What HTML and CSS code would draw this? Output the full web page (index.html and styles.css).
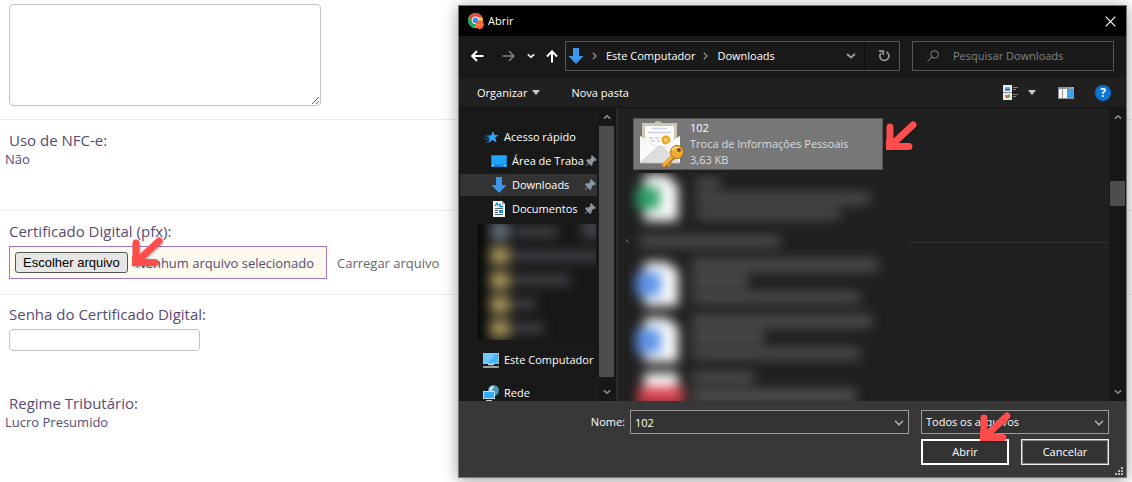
FILE: index.html
```html
<!DOCTYPE html>
<html lang="pt-BR">
<head>
<meta charset="utf-8">
<meta name="viewport" content="width=device-width, initial-scale=1">
<title>Certificado Digital</title>
<link rel="stylesheet" href="styles.css">
</head>
<body>
<svg class="defs" aria-hidden="true">
  <defs>
    <symbol id="arrow" viewBox="0 0 33 33">
      <path d="M6 7V25.500M25 26.500H6M6.500 26L29 5" fill="none" stroke="#ff4d4d" stroke-width="7" stroke-linecap="round" stroke-linejoin="round"/>
      <path d="M2 30V20H10V30Z" fill="#ff4d4d"/>
    </symbol>
    <symbol id="pin" viewBox="0 0 11 12">
      <path d="M6 0L11 5L9.500 6L8.500 5.800L6.500 8L6.500 10L5 11L2.800 8.400L.5 11L0 10.500L2.200 8L0 5.500L1.200 4.200L3.500 4.500L5.500 2.500L5 1Z" fill="#8a979f"/>
    </symbol>
    <symbol id="down" viewBox="0 0 16 16">
      <path d="M5 0H11V8H15.500L8 16L.5 8H5Z" fill="#3c97e8"/>
    </symbol>
    <symbol id="chev" viewBox="0 0 10 6">
      <path d="M1 .8L5 4.800L9 .8" fill="none" stroke="currentColor" stroke-width="1.300"/>
    </symbol>
    <symbol id="chev-bold" viewBox="0 0 10 6">
      <path d="M1 1L5 4.500L9 1" fill="none" stroke="currentColor" stroke-width="2"/>
    </symbol>
  </defs>
</svg>

<form class="form">
  <div class="row row-notes">
    <textarea class="notes" aria-label="Observações"></textarea>
  </div>
  <div class="row row-nfce">
    <div class="label">Uso de NFC-e:</div>
    <div class="value">Não</div>
  </div>
  <div class="row row-cert">
    <label class="label" for="choose">Certificado Digital (pfx):</label>
    <div class="upload">
      <div class="file">
        <button class="choose" id="choose" type="button">Escolher arquivo</button>
        <span>Nenhum arquivo selecionado</span>
        <svg class="arrow arrow-file" aria-hidden="true"><use href="#arrow"/></svg>
      </div>
      <a class="send" href="#">Carregar arquivo</a>
    </div>
  </div>
  <div class="row row-pass">
    <label class="label" for="pass">Senha do Certificado Digital:</label>
    <input class="pass" id="pass" type="password">
  </div>
  <div class="row row-tax">
    <div class="label">Regime Tributário:</div>
    <div class="value">Lucro Presumido</div>
  </div>
</form>

<section class="dialog" role="dialog" aria-label="Abrir">
  <header class="titlebar">
    <svg width="16" height="16" viewBox="0 0 16 16" aria-hidden="true">
      <circle cx="7.500" cy="7.500" r="7.500" fill="#fbc02d"/>
      <path d="M1 3.800A7.500 7.500 0 0 1 14.200 4.200H7.500L4.500 9Z" fill="#de4b3f"/>
      <path d="M1 3.800L5 10.500L8 11L6.500 15A7.500 7.500 0 0 1 1 3.800Z" fill="#1da462"/>
      <circle cx="7.500" cy="7.300" r="3.700" fill="#fff"/><circle cx="7.500" cy="7.300" r="2.900" fill="#4385f5"/>
      <circle cx="11.700" cy="11.700" r="4.200" fill="#ff6235"/>
      <path d="M9 12H14.500" stroke="#ffc2a8" stroke-width="1.200" stroke-dasharray="1.200 .6"/>
    </svg>
    <h1>Abrir</h1>
    <button class="plain close" type="button" aria-label="Fechar">
      <svg width="11" height="11" viewBox="0 0 11 11"><path d="M.7 .7L10.300 10.300M10.300 .7L.7 10.300" stroke="#fff" stroke-width="1.200"/></svg>
    </button>
  </header>

  <nav class="nav">
    <button class="plain" type="button" aria-label="Voltar"><svg width="13" height="12" viewBox="0 0 13 12"><path d="M12.500 6H1.500M6 1L1.200 6L6 11" fill="none" stroke="#fff" stroke-width="2"/></svg></button>
    <button class="plain fwd" type="button" aria-label="Avançar"><svg width="13" height="12" viewBox="0 0 13 12"><path d="M.5 6H11.500M7 1L11.800 6L7 11" fill="none" stroke="#838383" stroke-width="1.600"/></svg></button>
    <button class="plain recent" type="button" aria-label="Locais recentes"><svg width="8" height="6"><use href="#chev-bold"/></svg></button>
    <button class="plain up" type="button" aria-label="Acima"><svg width="12" height="13" viewBox="0 0 12 13"><path d="M6 12.500V1.500M1 6.500L6 1.300L11 6.500" fill="none" stroke="#fff" stroke-width="2"/></svg></button>
    <div class="address">
      <svg width="16" height="16"><use href="#down"/></svg>
      <svg class="sep" width="5" height="8" viewBox="0 0 5 8"><path d="M.8 .8L4 4L.8 7.200" fill="none" stroke="#888" stroke-width="1.500"/></svg>
      <span>Este Computador</span>
      <svg class="sep" width="5" height="8" viewBox="0 0 5 8"><path d="M.8 .8L4 4L.8 7.200" fill="none" stroke="#888" stroke-width="1.500"/></svg>
      <span>Downloads</span>
      <button class="plain drop" type="button" aria-label="Histórico"><svg width="10" height="6"><use href="#chev-bold"/></svg></button>
      <button class="plain reload" type="button" aria-label="Atualizar"><svg width="12" height="12" viewBox="0 0 12 12"><path d="M8.500 2A4.500 4.500 0 1 1 3 3M1 1.200H5.200V5" fill="none" stroke="#999" stroke-width="1.700"/></svg></button>
    </div>
    <label class="search">
      <svg width="12" height="12" viewBox="0 0 12 12"><circle cx="7.600" cy="4.400" r="3.800" fill="none" stroke="#888"/><path d="M5 7L.5 11.500" stroke="#888"/></svg>
      <input type="search" placeholder="Pesquisar Downloads" aria-label="Pesquisar Downloads">
    </label>
  </nav>

  <div class="toolbar">
    <button class="plain" type="button">Organizar <i class="caret"></i></button>
    <button class="plain" type="button">Nova pasta</button>
    <button class="plain view" type="button" aria-label="Modo de exibição">
      <svg width="15" height="15" viewBox="0 0 15 15"><path d="M0 0H9V15H0Z" fill="#eee"/><path d="M0 7.500H9" stroke="#888"/><path d="M2 2H7V4H2Z" fill="#5ab4ee"/><path d="M2 4H7V5.500H2Z" fill="#22608f"/><path d="M2 10H4.500V12H2Z" fill="#dd6b3b"/><path d="M4.500 9.500H7V12H4.500Z" fill="#69ad31"/><path d="M3 12H6V13H3Z" fill="#398bd1"/><path d="M10 2.500H15M10 4.500H13M10 9.500H15M10 11.500H13" stroke="#888"/></svg>
      <i class="caret"></i>
    </button>
    <button class="plain" type="button" aria-label="Painel de visualização">
      <svg width="16" height="12" viewBox="0 0 16 12"><path d="M0 0H16V12H0Z" fill="#8b9298"/><path d="M1 2H4V11H1ZM5 2H9V11H5Z" fill="#fff"/><path d="M10 2H15V11H10Z" fill="#3aa0f0"/><path d="M12 1H13M14 1H15" stroke="#eee"/></svg>
    </button>
    <button class="help" type="button" aria-label="Ajuda">?</button>
  </div>

  <div class="panes">
    <ul class="tree">
      <li class="root"><svg width="16" height="14" viewBox="0 0 16 14"><path d="M9 1L10.500 5L14.500 5.100L11.300 7.800L12.500 12.500L8.500 10L4.500 13L5.700 8.500L3 5.800L7.200 5.200Z" fill="#2ba5f7"/><path d="M1 6H6M0 9H5M2 12H5" stroke="#176fae"/></svg>Acesso rápido</li>
      <li><svg width="16" height="12" viewBox="0 0 16 12"><path d="M0 0H16V12H0Z" fill="#0b83dc"/><path d="M1 1H15V9L1 10Z" fill="#1fa5f8"/><path d="M1 10.500H3M11 10.500H12M13 10.500H15" stroke="#fff"/></svg><span>Área de Traba</span><svg class="pin"><use href="#pin"/></svg></li>
      <li class="selected"><svg width="16" height="16"><use href="#down"/></svg><span>Downloads</span><svg class="pin"><use href="#pin"/></svg></li>
      <li><svg width="16" height="16" viewBox="0 0 16 16"><path d="M2 0H11L14 3V16H2Z" fill="#f3f3f3"/><path d="M11 0V3H14" fill="#aaa"/><path d="M4 5L6 2L7 5M8 3.500H10M8 5.500H12" fill="none" stroke="#168bd9" stroke-width="1.300"/><path d="M4 7.500H12M4 13.500H12M4 9.500H7M4 11.500H7" stroke="#53636e"/><path d="M8 9H12V12H8Z" fill="#278dce"/></svg><span>Documentos</span><svg class="pin"><use href="#pin"/></svg></li>
      <li class="hazy" aria-hidden="true">
        <svg width="118" height="116" viewBox="0 0 118 116">
          <path d="M0 0H118V116H0Z" fill="#171717"/>
          <g class="soft">
            <path d="M-8 -8H7V124H-8Z" fill="#080808"/>
            <path d="M13 -2H31V16H13Z" fill="#69727f"/>
            <path d="M12 23H32V40H12ZM12 48H32V65H12ZM12 72H32V89H12ZM12 96H32V113H12Z" fill="#a8965a"/>
            <path d="M36 3H80V13H36ZM36 27H124V37H36ZM36 51H92V61H36ZM36 75H58V85H36ZM36 99H66V109H36ZM104 -4H124V14H104Z" fill="#46464b"/>
          </g>
        </svg>
      </li>
      <li class="root pc"><svg width="16" height="15" viewBox="0 0 16 15"><path d="M0 0H16V11H0Z" fill="#a7bdcb"/><path d="M1 1H15V10H1Z" fill="#48b4f7"/><path d="M1 1H12L5 10H1Z" fill="#70c7fb"/><path d="M5 11.500H11M0 14H16" stroke="#c5ced4" stroke-width="1.300"/></svg>Este Computador</li>
      <li class="root net"><svg width="16" height="16" viewBox="0 0 16 16"><circle cx="10.500" cy="5.500" r="5.500" fill="#4a96ae"/><path d="M7 2Q10 0 11 2L9 5L11 7L9 9L6 6Z" fill="#bde0e8"/><path d="M0 6H12V14H0Z" fill="#c4dce9"/><path d="M1 7H11V13H1Z" fill="#35adf5"/><path d="M3 15.500H9" stroke="#c5ced4"/></svg>Rede</li>
    </ul>
    <div class="scroll scroll-tree" aria-hidden="true"><svg width="8" height="6"><use href="#chev-bold"/></svg><i class="thumb"></i><svg width="8" height="6"><use href="#chev-bold"/></svg></div>

    <div class="files">
      <div class="item">
        <svg class="cert" width="48" height="48" viewBox="0 0 48 48" aria-hidden="true">
          <path d="M5 3H17Q21 -1 25 3H40V27H5Z" fill="#cfc5b3"/><path d="M8 6H37V26H8Z" fill="#fbfbfa"/>
          <path d="M15 8.500H30M11 12.500H34" stroke="#cdd0e8" stroke-width="1.500"/><path d="M12 18H25M14 21H23" stroke="#d3d7e2" stroke-dasharray="4 2" stroke-width="2"/>
          <circle cx="29" cy="20" r="4.500" fill="#e5aa2c"/><circle cx="29" cy="20" r="2" fill="#f6cf62"/>
          <path d="M3 16L23 28L43 16V43H3Z" fill="#eee"/><path d="M3 16L20 29L3 42ZM43 16L26 29L43 42Z" fill="#fafafa"/>
          <path d="M3 43L21 27Q23 25 25 27L43 43Z" fill="#dedede" stroke="#c5c5c5" stroke-width=".7"/>
          <path d="M38 35L26 47" stroke="#a76a12" stroke-width="5"/><path d="M38 34L26 46" stroke="#f5b73d" stroke-width="3"/><path d="M30 43L33 46" stroke="#dc9524" stroke-width="2.500"/>
          <circle cx="40" cy="32" r="6.500" fill="#f0ad32" stroke="#aa6910"/><path d="M35 30Q38 26 43 28" fill="none" stroke="#ffe1a0" stroke-width="1.500"/><circle cx="42" cy="30" r="2" fill="#655335"/>
        </svg>
        <div class="meta"><strong>102</strong><span>Troca de Informações Pessoais</span><span>3,63 KB</span></div>
        <svg class="arrow arrow-item" aria-hidden="true"><use href="#arrow"/></svg>
      </div>
      <svg class="haze" width="282" height="230" viewBox="0 0 282 230" aria-hidden="true">
        <g class="soft">
          <g fill="#fff"><path d="M16 2H39L50 13V48H16ZM16 89H39L50 98V133H16ZM16 145H39L50 154V189H16ZM16 200H50V216H16Z"/></g>
          <path d="M8 14H32V36H8Z" fill="#2d9f66"/>
          <path d="M8 99H33V123H8ZM8 156H33V180H8Z" fill="#5c93e8"/>
          <path d="M10 214H56V232H10Z" fill="#d8424f"/>
          <path d="M68 5H92V15H68ZM68 20H242V31H68ZM68 36H212V46H68ZM12 63H152V74H12ZM64 86H250V98H64ZM64 102H120V114H64ZM64 119H232V130H64ZM64 142H244V154H64ZM64 158H136V170H64ZM64 175H232V186H64ZM64 199H126V210H64ZM64 216H228V230H64Z" fill="#505050"/>
        </g>
      </svg>
      <svg class="group-mark" width="4" height="4" viewBox="0 0 4 4" aria-hidden="true"><path d="M.5 .5L3.500 3.500" stroke="#888"/></svg>
      <i class="group-line"></i>
    </div>
    <div class="scroll scroll-files" aria-hidden="true"><svg width="8" height="6"><use href="#chev-bold"/></svg><i class="thumb"></i><svg width="8" height="6"><use href="#chev-bold"/></svg></div>
  </div>

  <footer class="footer">
    <label class="name-label" for="name">Nome:</label>
    <div class="combo name"><input id="name" type="text" value="102"><svg width="10" height="6"><use href="#chev"/></svg></div>
    <div class="combo type"><select aria-label="Tipo de arquivo"><option>Todos os arquivos</option></select><svg width="10" height="6"><use href="#chev"/></svg></div>
    <div class="actions">
      <button class="action primary" type="button">Abrir</button>
      <button class="action" type="button">Cancelar</button>
      <svg class="arrow arrow-open" aria-hidden="true"><use href="#arrow"/></svg>
    </div>
    <svg class="grip" width="8" height="8" viewBox="0 0 8 8" aria-hidden="true"><path d="M6 0H8V2H6ZM3 3H5V5H3ZM6 3H8V5H6ZM0 6H2V8H0ZM3 6H5V8H3ZM6 6H8V8H6Z" fill="#bbb"/></svg>
  </footer>
</section>
</body>
</html>
```
FILE: styles.css
```css
* { box-sizing: border-box; }

body {
  margin: 0;
  position: relative;
  overflow: hidden;
  min-height: 100vh;
  background: #fff;
  color: #574b75;
  font: 13px/18px "Open Sans", "Noto Sans", sans-serif;
}

svg { display: block; flex: none; }
.defs { position: absolute; width: 0; height: 0; }
.soft { filter: blur(6px); }
.arrow {
  position: absolute;
  width: 33px;
  height: 33px;
  pointer-events: none;
  filter: drop-shadow(1px 1px 1px rgba(0, 0, 0, .3));
}

/* Form page */
.row { border-bottom: 1px solid #ececec; padding: 0 9px; }
.row-notes { height: 120px; padding-top: 4px; }
.row-nfce { height: 91px; padding-top: 10px; }
.row-cert { height: 84px; padding-top: 10px; }
.row-pass { padding-top: 9px; border-bottom: 0; }
.row-tax { padding-top: 42px; border-bottom: 0; }
.notes {
  display: block;
  width: 312px;
  height: 102px;
  border: 1px solid #c4c4c4;
  border-radius: 4px;
  background: #fff;
}
.label { display: block; font-size: 15px; line-height: 20px; }
.value { margin-left: -4px; }
.upload { display: flex; align-items: center; gap: 10px; margin-top: 5px; }
.file {
  position: relative;
  display: flex;
  align-items: center;
  gap: 8px;
  min-width: 318px;
  height: 33px;
  padding: 0 5px;
  border: 1px solid #9e76cc;
  background: #fcf9ee;
}
.choose {
  height: 21px;
  padding: 0 7px;
  border: 1px solid #555;
  border-radius: 3px;
  background: #e6e6e6;
  color: #000;
  font: 13px/18px "Liberation Sans", Arial, sans-serif;
}
.arrow-file { left: 120px; top: -11px; }
.send { color: #666; text-decoration: none; }
.pass {
  display: block;
  width: 191px;
  height: 22px;
  margin-top: 5px;
  border: 1px solid #c4c4c4;
  border-radius: 4px;
}

/* File dialog */
.dialog {
  position: absolute;
  left: 458px;
  right: 5px;
  top: 5px;
  border: 1px solid #767676;
  background: #202020;
  color: #fff;
  font-size: 11px;
  line-height: 16px;
  box-shadow: 0 2px 14px rgba(0, 0, 0, .4);
}
.plain {
  display: flex;
  align-items: center;
  padding: 0;
  border: 0;
  background: none;
  color: inherit;
  font: inherit;
}
.titlebar { display: flex; align-items: center; gap: 4px; height: 30px; padding: 0 10px 0 9px; background: #000; }
.titlebar h1 { margin: 0; font: inherit; }
.close { margin-left: auto; }

.nav { display: flex; align-items: center; height: 42px; padding: 0 12px 2px; background: #191919; }
.fwd { margin-left: 18px; }
.recent { margin-left: 12px; }
.up { margin-left: 11px; }
.address {
  display: flex;
  align-items: center;
  flex: 1;
  height: 30px;
  margin: 0 12px 0 7px;
  padding-left: 2px;
  border: 1px solid #555;
}
.sep { margin: 0 9px 0 8px; }
.drop { margin-left: auto; padding-right: 8px; color: #999; }
.reload { height: 28px; padding: 0 9px 0 13px; border-left: 1px solid #101010; }
.search {
  display: flex;
  align-items: center;
  gap: 14px;
  width: 202px;
  height: 30px;
  padding: 0 14px;
  border: 1px solid #555;
}
.search input { flex: 1; min-width: 0; padding: 0; border: 0; outline: 0; background: none; color: #fff; font: inherit; }
.search input::placeholder { color: #838383; opacity: 1; }

.toolbar { display: flex; align-items: center; height: 30px; gap: 31px; padding: 0 15px 0 18px; border-bottom: 1px solid #151515; }
.caret { margin-left: 5px; border: 4px solid transparent; border-top: 5px solid #ccc; border-bottom: 0; }
.view { margin-left: auto; margin-right: -9px; }
.view .caret { margin-left: 10px; }
.help { width: 16px; height: 16px; margin-left: -10px; padding: 0; border: 0; border-radius: 50%; background: #0873d2; color: #fff; font: bold 12px/16px "Open Sans", sans-serif; }

.panes { display: flex; height: 293px; }
.tree { width: 140px; margin: 0; padding: 17px 0 0; overflow: hidden; list-style: none; background: #191919; white-space: nowrap; }
.tree li { display: flex; align-items: center; gap: 5px; height: 24px; padding: 0 3px 0 32px; }
.tree span { flex: 1; }
.tree .root { gap: 4px; padding: 0 0 0 25px; }
.tree .selected { height: 22px; margin: 1px 2px 1px 1px; padding-left: 31px; padding-right: 1px; background: #333; }
.tree .pin { width: 11px; height: 12px; margin-left: -3px; }
.tree .hazy { height: 122px; padding: 0 0 0 19px; }
.tree .pc { height: 34px; }
.tree .net { height: 32px; }
.tree .pc, .tree .net { padding-left: 24px; gap: 5px; }
.scroll { display: flex; flex-direction: column; align-items: center; padding: 6px 0; background: #171717; color: #888; }
.scroll svg:first-child { transform: scaleY(-1); }
.scroll svg:last-child { margin-top: auto; }
.scroll-tree { width: 19px; padding-right: 2px; border-right: 2px solid #2b2b2b; }
.thumb { background: #4d4d4d; }
.scroll-tree .thumb { width: 15px; height: 251px; margin-top: 6px; }
.scroll-files { width: 17px; }
.scroll-files .thumb { width: 15px; height: 25px; margin-top: 61px; }

.files { position: relative; flex: 1; padding: 10px 16px 0 15px; }
.item {
  position: relative;
  display: flex;
  align-items: center;
  gap: 5px;
  width: 250px;
  height: 52px;
  padding: 0 1px 0 3px;
  border: 1px solid #555;
  background: #777;
}
.meta { display: flex; flex-direction: column; color: #ddd; white-space: nowrap; }
.meta strong { color: #fff; font-weight: 400; }
.arrow-item { left: 250px; top: 1px; }
.haze { margin: 3px 0 0 -5px; overflow: hidden; }
.group-mark { position: absolute; left: 7px; top: 131px; }
.group-line { position: absolute; left: 292px; right: 0; top: 134px; border-top: 1px solid #333; }

.footer {
  position: relative;
  display: grid;
  grid-template-columns: 166px minmax(0, 1fr) 188px;
  gap: 5px 0;
  padding: 9px 17px 12px 0;
  background: #383838;
}
.name-label { text-align: right; line-height: 24px; }
.combo { position: relative; height: 24px; border: 1px solid #999; background: #333; }
.combo input, .combo select { display: block; width: 100%; height: 100%; padding: 0 24px 0 4px; border: 0; outline: 0; appearance: none; background: none; color: #fff; font: inherit; }
.combo svg { position: absolute; right: 4px; top: 9px; color: #bbb; }
.name { margin: 0 12px 0 5px; }
.actions { position: relative; grid-column: 3; display: grid; grid-template-columns: 1fr 1fr; gap: 12px; }
.action { height: 26px; padding: 0; border: 1px solid #eee; box-shadow: inset 0 0 0 1px #888; background: #333; color: #fff; font: inherit; }
.primary { border: 2px solid #fff; box-shadow: none; }
.arrow-open { left: 57px; top: -28px; }
.grip { position: absolute; right: 3px; bottom: 2px; }
```
